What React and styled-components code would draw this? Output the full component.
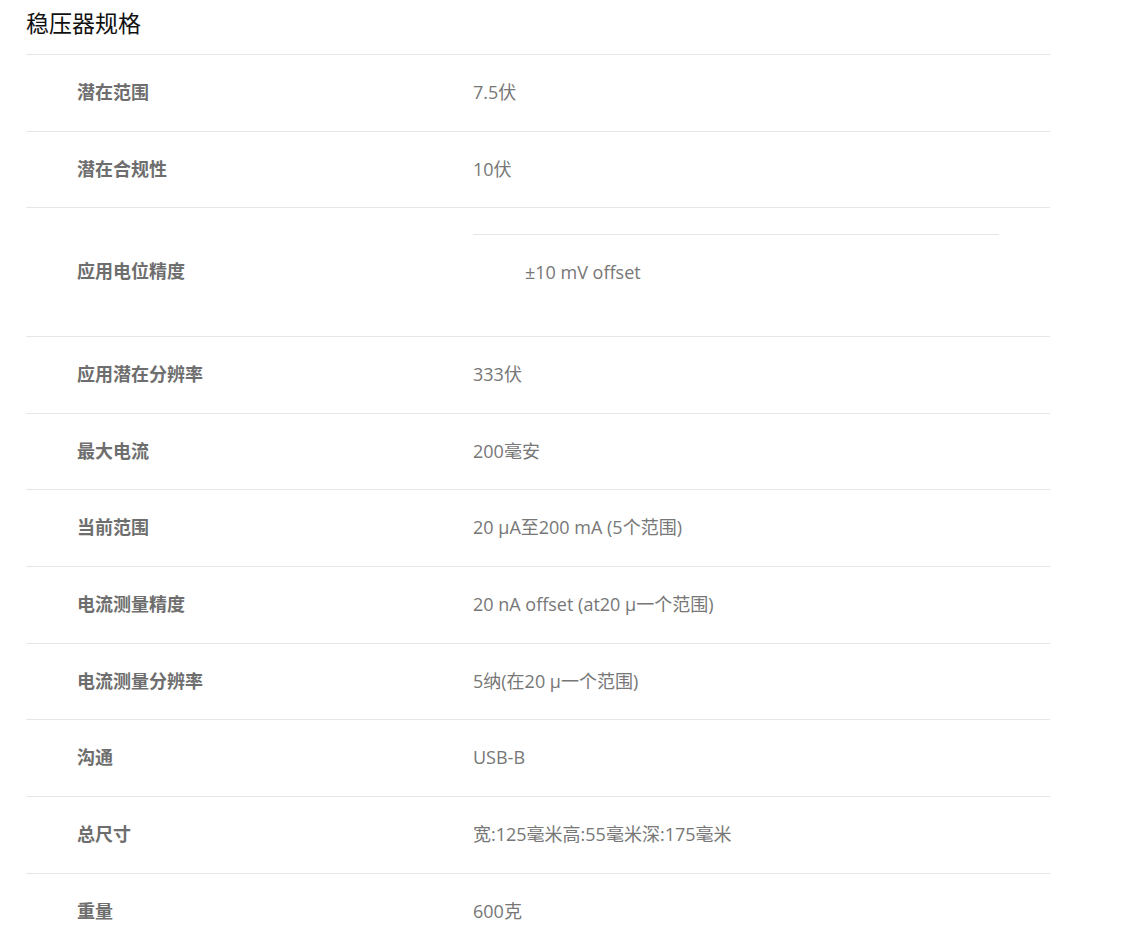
import styled, { createGlobalStyle } from "styled-components";

const GlobalStyle = createGlobalStyle`
  body {
    margin: 0;
    background: #fff;
    font-family: "Open Sans", "Noto Sans CJK SC", sans-serif;
  }
`;

const specs = [
  { label: "潜在范围", value: "7.5伏" },
  { label: "潜在合规性", value: "10伏" },
  { label: "应用电位精度", value: "±10 mV offset", nested: true },
  { label: "应用潜在分辨率", value: "333伏" },
  { label: "最大电流", value: "200毫安" },
  { label: "当前范围", value: "20 μA至200 mA (5个范围)" },
  { label: "电流测量精度", value: "20 nA offset (at20 μ一个范围)" },
  { label: "电流测量分辨率", value: "5纳(在20 μ一个范围)" },
  { label: "沟通", value: "USB-B" },
  { label: "总尺寸", value: "宽:125毫米高:55毫米深:175毫米" },
  { label: "重量", value: "600克" },
];

const App = () => {
  return (
    <Page>
      <GlobalStyle />
      <Title>稳压器规格</Title>
      <Table>
        {specs.map((s) => (
          <Row key={s.label}>
            <Label>{s.label}</Label>
            <Value $nested={s.nested}>
              {s.nested ? <Inner>{s.value}</Inner> : s.value}
            </Value>
          </Row>
        ))}
      </Table>
    </Page>
  );
};

const Page = styled.div`
  padding: 0 98px 0 26px;
  width: 1024px;
`;

const Title = styled.h2`
  margin: 0;
  padding-top: 7px;
  font-size: 23px;
  line-height: 30px;
  font-weight: normal;
  color: #111;
  font-family: "Noto Sans CJK SC", sans-serif;
  height: 47px;
`;

const Table = styled.div`
  display: flex;
  flex-direction: column;
`;

const Row = styled.div`
  display: grid;
  grid-template-columns: 447px 1fr;
  align-items: center;
  border-top: 1px solid #e6e6e6;
  font-size: 18px;
  line-height: 26.67px;
`;

const Label = styled.div`
  padding: 24px 0 25px 51px;
  font-weight: bold;
  color: #6e6e6e;
`;

const Value = styled.div`
  padding: ${(p) => (p.$nested ? "26px 51px 26px 0" : "24px 51px 25px 0")};
  color: #777;
`;

const Inner = styled.div`
  border-top: 1px solid #e6e6e6;
  padding: 24px 0 24px 52px;
`;

export default App;
